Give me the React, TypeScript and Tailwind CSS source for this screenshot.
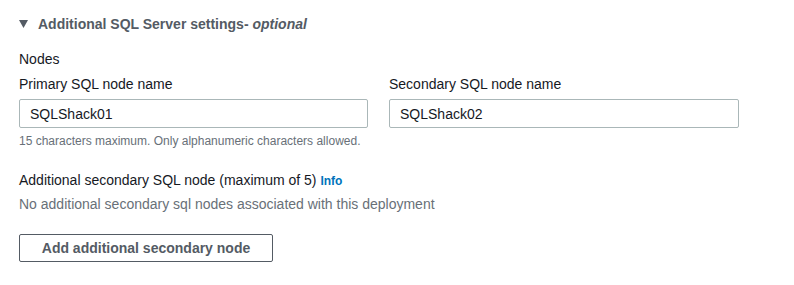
export default function App() {
  return (
    <div
      className="w-[794px] h-[285px] bg-white text-[#16191f] pl-[19px] pt-[14px]"
      style={{ fontFamily: '"Liberation Sans", Arial, sans-serif' }}
    >
      {/* Expandable header */}
      <div className="flex items-center h-[20px]">
        <svg width="9" height="8" viewBox="0 0 9 8" className="mr-[10px]">
          <polygon points="0,0 9,0 4.5,8" fill="#545b64" />
        </svg>
        <span className="text-[14px] font-bold text-[#545b64]">
          Additional SQL Server settings- <i>optional</i>
        </span>
      </div>

      <div className="mt-[15px] text-[14px] leading-[20px]">Nodes</div>

      <div className="grid grid-cols-[349px_350px] gap-x-[21px] mt-[5px]">
        <div>
          <label className="block text-[14px] leading-[20px]">Primary SQL node name</label>
          <input
            readOnly
            value="SQLShack01"
            className="mt-[5px] w-full h-[29px] border border-[#aab7b8] rounded-[2px] px-[10px] text-[14px] text-[#16191f] outline-none"
          />
          <p className="mt-[5px] text-[12px] leading-[16px] text-[#687078]">
            15 characters maximum. Only alphanumeric characters allowed.
          </p>
        </div>
        <div>
          <label className="block text-[14px] leading-[20px]">Secondary SQL node name</label>
          <input
            readOnly
            value="SQLShack02"
            className="mt-[5px] w-full h-[29px] border border-[#aab7b8] rounded-[2px] px-[10px] text-[14px] text-[#16191f] outline-none"
          />
        </div>
      </div>

      <div className="mt-[21px] text-[14px] leading-[20px]">
        Additional secondary SQL node (maximum of 5){' '}
        <a className="text-[12px] font-bold text-[#0073bb]">Info</a>
      </div>
      <p className="mt-[3px] text-[14px] leading-[20px] text-[#687078]">
        No additional secondary sql nodes associated with this deployment
      </p>

      <button className="mt-[20px] w-[254px] h-[28px] border border-[#545b64] rounded-[2px] text-[14px] font-bold text-[#545b64]">
        Add additional secondary node
      </button>
    </div>
  );
}
